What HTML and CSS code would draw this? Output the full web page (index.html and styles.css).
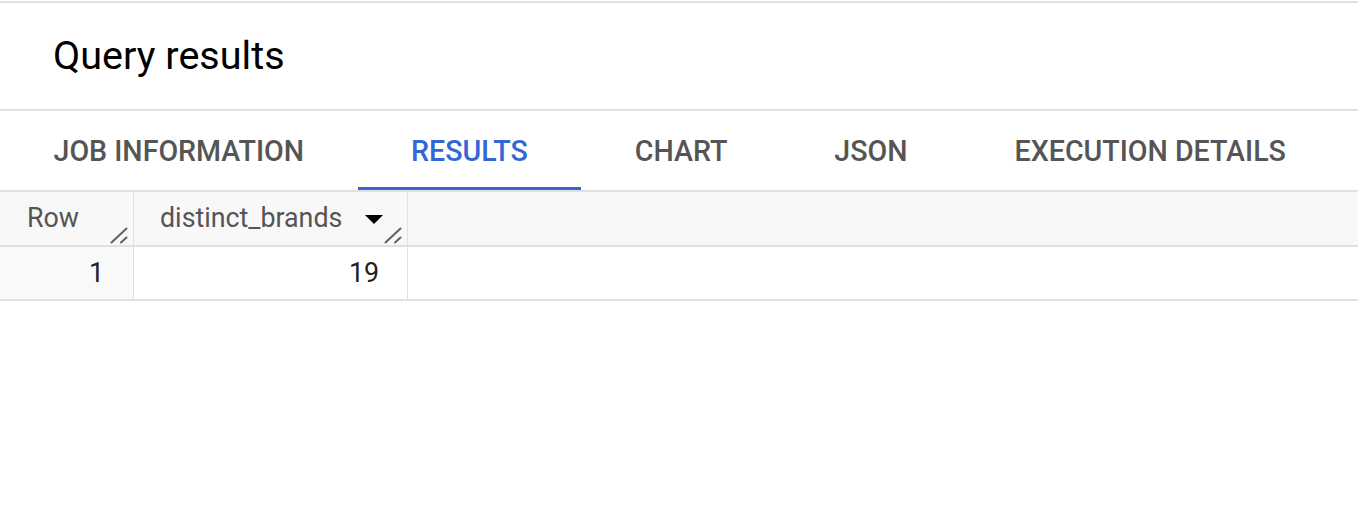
FILE: index.html
```html
<!DOCTYPE html>
<html>
<head>
<meta charset="utf-8">
<link rel="stylesheet" href="styles.css">
</head>
<body>
<div class="page">
  <div class="title-bar">
    <h1 class="title">Query results</h1>
  </div>
  <nav class="tabs">
    <div class="tab">JOB INFORMATION</div>
    <div class="tab active">RESULTS</div>
    <div class="tab">CHART</div>
    <div class="tab">JSON</div>
    <div class="tab">EXECUTION DETAILS</div>
  </nav>
  <div class="grid">
    <div class="hrow">
      <div class="hcell rownum">Row
        <svg class="resize" width="18" height="17" viewBox="0 0 18 17"><path d="M1.5 15.5 L16.5 1.5 M11 15.5 L16.5 10.5" stroke="#616161" stroke-width="2" stroke-linecap="round" fill="none"/></svg>
      </div>
      <div class="hcell col">distinct_brands
        <svg class="sort" width="18" height="10" viewBox="0 0 18 10"><path d="M0 0 L18 0 L9 9 Z" fill="#000"/></svg>
        <svg class="resize" width="18" height="17" viewBox="0 0 18 17"><path d="M1.5 15.5 L16.5 1.5 M11 15.5 L16.5 10.5" stroke="#616161" stroke-width="2" stroke-linecap="round" fill="none"/></svg>
      </div>
      <div class="hcell filler"></div>
    </div>
    <div class="brow">
      <div class="bcell rownum">1</div>
      <div class="bcell col">19</div>
      <div class="bcell filler"></div>
    </div>
  </div>
</div>
</body>
</html>
```
FILE: styles.css
```css
html, body {
  margin: 0;
  padding: 0;
  background: #fff;
  font-family: Roboto, "Liberation Sans", Arial, sans-serif;
}
.page {
  padding-top: 1px;
}
.title-bar {
  border-top: 2px solid #e0e0e0;
  border-bottom: 2px solid #e0e0e0;
  height: 106px;
  display: flex;
  align-items: flex-start;
}
.title {
  margin: 0;
  padding: 30px 0 0 53px;
  font-size: 39.6px;
  font-weight: 400;
  line-height: 46px;
  color: #000;
}
.tabs {
  display: flex;
  height: 79px;
  border-bottom: 2px solid #e0e0e0;
}
.tab {
  flex-shrink: 0;
  white-space: nowrap;
  padding: 3px 53.5px 0;
  display: flex;
  align-items: center;
  font-size: 28.6px;
  font-weight: 500;
  color: #555;
  box-sizing: border-box;
  border-bottom: 3px solid transparent;
}
.tab.active {
  color: #3367d6;
  border-bottom-color: #3367d6;
}
.grid {
  font-size: 26.8px;
}
.hrow, .brow {
  display: flex;
  border-bottom: 2px solid #e0e0e0;
}
.hrow {
  height: 53px;
  background: #f8f8f8;
}
.brow {
  height: 52px;
  background: #fff;
}
.hcell, .bcell {
  box-sizing: border-box;
  position: relative;
  display: flex;
  align-items: center;
  white-space: nowrap;
}
.rownum {
  width: 134px;
  border-right: 1px solid #e0e0e0;
}
.col {
  width: 274px;
  border-right: 1px solid #e0e0e0;
}
.filler {
  flex: 1;
}
.hcell {
  color: #555;
  padding-bottom: 1px;
}
.hcell.rownum {
  padding-left: 27px;
}
.hcell.col {
  padding-left: 26px;
}
.bcell {
  color: #202124;
}
.bcell.rownum {
  background: #f9f9f9;
  justify-content: flex-end;
  padding-right: 29px;
}
.bcell.col {
  justify-content: flex-end;
  padding-right: 28px;
}
.resize {
  position: absolute;
  right: 5px;
  bottom: 1px;
}
.sort {
  position: absolute;
  right: 24px;
  top: 23px;
}
```
